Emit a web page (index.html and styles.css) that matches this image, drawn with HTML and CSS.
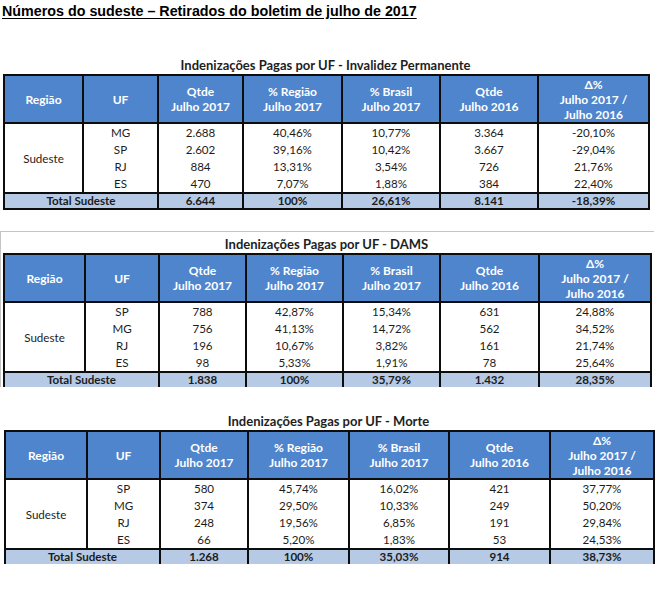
FILE: index.html
```html
<!DOCTYPE html>
<html lang="pt-BR">
<head>
<meta charset="utf-8">
<title>Números do sudeste</title>
<link rel="stylesheet" href="styles.css">
</head>
<body>
<h1 class="page-title">Números do sudeste – Retirados do boletim de julho de 2017</h1>

<section class="block block-1">
  <h2 class="tbl-title">Indenizações Pagas por UF - Invalidez Permanente</h2>
  <table class="data t1">
    <colgroup><col><col><col><col><col><col><col></colgroup>
    <thead>
      <tr><th>Região</th><th>UF</th><th>Qtde<br>Julho 2017</th><th>% Região<br>Julho 2017</th><th>% Brasil<br>Julho 2017</th><th>Qtde<br>Julho 2016</th><th>Δ%<br>Julho 2017 /<br>Julho 2016</th></tr>
    </thead>
    <tbody>
      <tr class="r-first"><td rowspan="4" class="region">Sudeste</td><td>MG</td><td>2.688</td><td>40,46%</td><td>10,77%</td><td>3.364</td><td>-20,10%</td></tr>
      <tr><td>SP</td><td>2.602</td><td>39,16%</td><td>10,42%</td><td>3.667</td><td>-29,04%</td></tr>
      <tr><td>RJ</td><td>884</td><td>13,31%</td><td>3,54%</td><td>726</td><td>21,76%</td></tr>
      <tr class="r-last"><td>ES</td><td>470</td><td>7,07%</td><td>1,88%</td><td>384</td><td>22,40%</td></tr>
      <tr class="total"><td colspan="2">Total Sudeste</td><td>6.644</td><td>100%</td><td>26,61%</td><td>8.141</td><td>-18,39%</td></tr>
    </tbody>
  </table>
</section>

<section class="block block-2">
  <h2 class="tbl-title">Indenizações Pagas por UF - DAMS</h2>
  <table class="data t2 cut">
    <colgroup><col><col><col><col><col><col><col></colgroup>
    <thead>
      <tr><th>Região</th><th>UF</th><th>Qtde<br>Julho 2017</th><th>% Região<br>Julho 2017</th><th>% Brasil<br>Julho 2017</th><th>Qtde<br>Julho 2016</th><th>Δ%<br>Julho 2017 /<br>Julho 2016</th></tr>
    </thead>
    <tbody>
      <tr class="r-first"><td rowspan="4" class="region">Sudeste</td><td>SP</td><td>788</td><td>42,87%</td><td>15,34%</td><td>631</td><td>24,88%</td></tr>
      <tr><td>MG</td><td>756</td><td>41,13%</td><td>14,72%</td><td>562</td><td>34,52%</td></tr>
      <tr><td>RJ</td><td>196</td><td>10,67%</td><td>3,82%</td><td>161</td><td>21,74%</td></tr>
      <tr class="r-last"><td>ES</td><td>98</td><td>5,33%</td><td>1,91%</td><td>78</td><td>25,64%</td></tr>
      <tr class="total"><td colspan="2">Total Sudeste</td><td>1.838</td><td>100%</td><td>35,79%</td><td>1.432</td><td>28,35%</td></tr>
    </tbody>
  </table>
</section>

<section class="block block-3">
  <h2 class="tbl-title">Indenizações Pagas por UF - Morte</h2>
  <table class="data t3 cut">
    <colgroup><col><col><col><col><col><col><col></colgroup>
    <thead>
      <tr><th>Região</th><th>UF</th><th>Qtde<br>Julho 2017</th><th>% Região<br>Julho 2017</th><th>% Brasil<br>Julho 2017</th><th>Qtde<br>Julho 2016</th><th>Δ%<br>Julho 2017 /<br>Julho 2016</th></tr>
    </thead>
    <tbody>
      <tr class="r-first"><td rowspan="4" class="region">Sudeste</td><td>SP</td><td>580</td><td>45,74%</td><td>16,02%</td><td>421</td><td>37,77%</td></tr>
      <tr><td>MG</td><td>374</td><td>29,50%</td><td>10,33%</td><td>249</td><td>50,20%</td></tr>
      <tr><td>RJ</td><td>248</td><td>19,56%</td><td>6,85%</td><td>191</td><td>29,84%</td></tr>
      <tr class="r-last"><td>ES</td><td>66</td><td>5,20%</td><td>1,83%</td><td>53</td><td>24,53%</td></tr>
      <tr class="total"><td colspan="2">Total Sudeste</td><td>1.268</td><td>100%</td><td>35,03%</td><td>914</td><td>38,73%</td></tr>
    </tbody>
  </table>
</section>
</body>
</html>
```

FILE: styles.css
```css
html, body {
  margin: 0;
  padding: 0;
  background: #ffffff;
}

body {
  width: 657px;
  font-family: Lato, "Open Sans", sans-serif;
  color: #1c1c1c;
}

.page-title {
  margin: 0;
  padding: 3px 0 0 2px;
  font-family: "Liberation Sans", Arial, sans-serif;
  font-size: 14.3px;
  line-height: 17px;
  font-weight: bold;
  color: #000;
  text-decoration: underline;
  text-underline-offset: 2px;
}

.block {
  display: flex;
  flex-direction: column;
  align-items: flex-start;
}

.block-1 {
  margin-top: 37px;
  padding-left: 3px;
}

.block-2 {
  margin-top: 21px;
  width: 651px;
  padding-left: 2px;
  border-top: 1px solid #c4c4c4;
  border-left: 1px solid #c4c4c4;
  padding-top: 4px;
}

.block-3 {
  margin-top: 26px;
  padding-left: 4px;
}

.tbl-title {
  margin: 0;
  align-self: stretch;
  text-align: center;
  font-size: 13px;
  line-height: 16px;
  font-weight: bold;
  color: #1e1e1e;
  padding-bottom: 1px;
}

.block-1 .tbl-title { width: 645px; }
.block-2 .tbl-title { width: 647px; }
.block-3 .tbl-title { width: 649px; }

.data {
  border-collapse: collapse;
  table-layout: fixed;
}

.data th,
.data td {
  padding: 0;
  text-align: center;
  vertical-align: middle;
  border-left: 2px solid #0d0d0d;
  border-right: 2px solid #0d0d0d;
}

.data th {
  background: #4f85cd;
  color: #ffffff;
  font-weight: bold;
  font-size: 12px;
  line-height: 15px;
  height: 46px;
  border-top: 2px solid #0d0d0d;
  border-bottom: 2px solid #0d0d0d;
}

.data td {
  font-size: 11.6px;
  line-height: 17px;
  height: 17px;
}

.data .total td {
  background: #b6cae5;
  font-weight: bold;
  height: 14px;
  line-height: 14px;
  border-top: 2px solid #0d0d0d;
  border-bottom: 2px solid #0d0d0d;
}

.data.cut .total td {
  border-bottom: none;
}

.t1 { width: 645px; }
.t1 col:nth-child(1) { width: 79px; }
.t1 col:nth-child(2) { width: 75px; }
.t1 col:nth-child(3) { width: 85px; }
.t1 col:nth-child(4) { width: 99px; }
.t1 col:nth-child(5) { width: 98px; }
.t1 col:nth-child(6) { width: 98px; }
.t1 col:nth-child(7) { width: 111px; }

.t2 { width: 647px; }
.t2 col:nth-child(1) { width: 81px; }
.t2 col:nth-child(2) { width: 74px; }
.t2 col:nth-child(3) { width: 87px; }
.t2 col:nth-child(4) { width: 97px; }
.t2 col:nth-child(5) { width: 97px; }
.t2 col:nth-child(6) { width: 99px; }
.t2 col:nth-child(7) { width: 112px; }

.t3 { width: 649px; }
.t3 col:nth-child(1) { width: 82px; }
.t3 col:nth-child(2) { width: 73px; }
.t3 col:nth-child(3) { width: 88px; }
.t3 col:nth-child(4) { width: 101px; }
.t3 col:nth-child(5) { width: 100px; }
.t3 col:nth-child(6) { width: 101px; }
.t3 col:nth-child(7) { width: 104px; }
```
